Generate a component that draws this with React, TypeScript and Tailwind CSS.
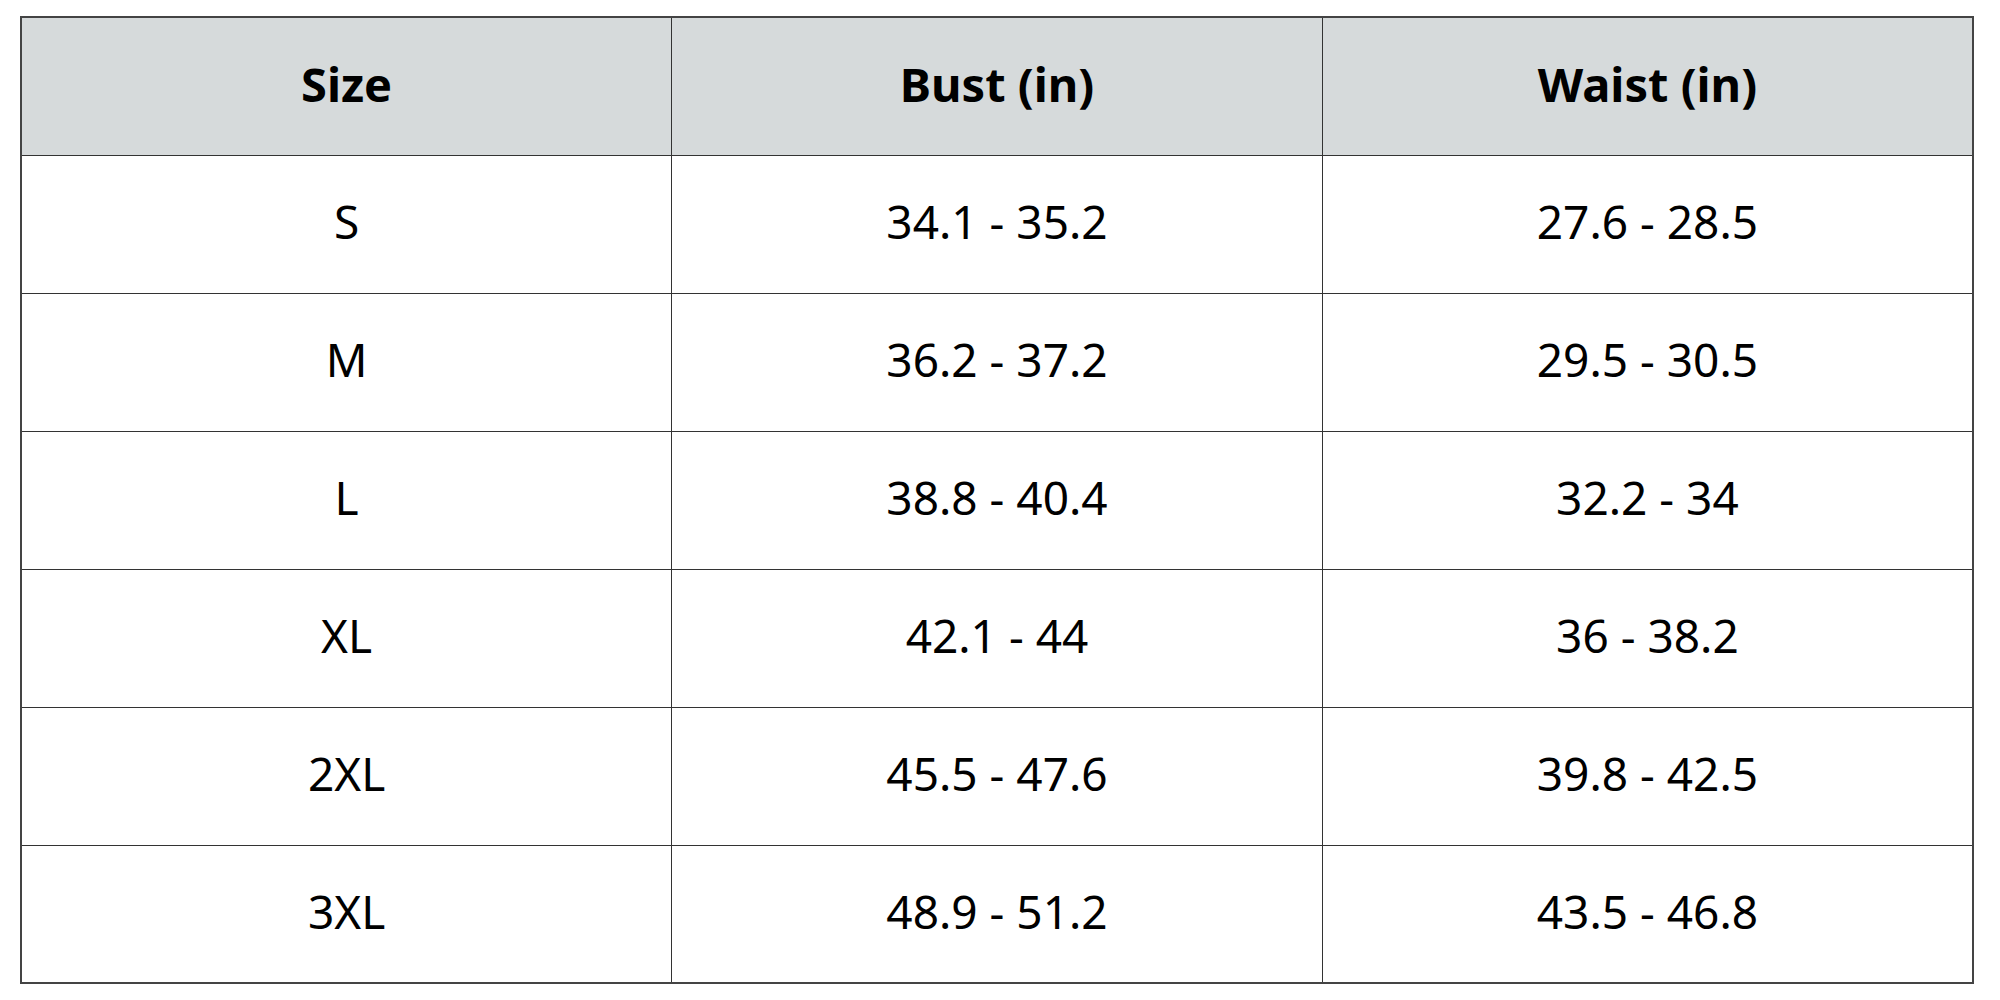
const rows = [
  ["S", "34.1 - 35.2", "27.6 - 28.5"],
  ["M", "36.2 - 37.2", "29.5 - 30.5"],
  ["L", "38.8 - 40.4", "32.2 - 34"],
  ["XL", "42.1 - 44", "36 - 38.2"],
  ["2XL", "45.5 - 47.6", "39.8 - 42.5"],
  ["3XL", "48.9 - 51.2", "43.5 - 46.8"],
]

export default function App() {
  return (
    <div className="w-[2000px] h-[1000px] bg-white pt-[16px] pl-[20px]" style={{ fontFamily: '"Noto Sans", "Open Sans", sans-serif' }}>
      <table className="w-[1954px] border-collapse border-2 border-[#444] table-fixed text-black">
        <thead>
          <tr className="h-[138px] bg-[#d6dadb]">
            <th className="border border-[#333] pb-[5px] text-[47px] font-bold">Size</th>
            <th className="border border-[#333] pb-[5px] text-[47px] font-bold">Bust (in)</th>
            <th className="border border-[#333] pb-[5px] text-[47px] font-bold">Waist (in)</th>
          </tr>
        </thead>
        <tbody>
          {rows.map((row) => (
            <tr key={row[0]} className="h-[138px]">
              {row.map((cell, i) => (
                <td key={i} className="border border-[#333] pb-[5px] text-center text-[46px] font-normal">
                  {cell}
                </td>
              ))}
            </tr>
          ))}
        </tbody>
      </table>
    </div>
  )
}
